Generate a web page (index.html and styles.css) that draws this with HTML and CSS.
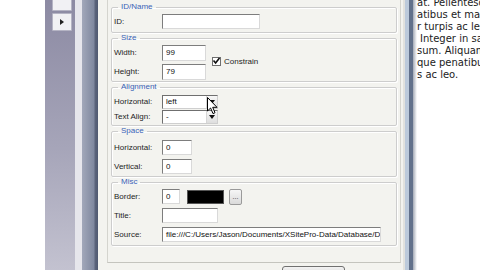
FILE: index.html
```html
<!DOCTYPE html>
<html lang="en">
<head>
  <meta charset="UTF-8" />
  <meta name="viewport" content="width=device-width, initial-scale=1.0"/>
  <title>Image Properties</title>
  <link rel="stylesheet" href="styles.css">
</head>
<body>
  <div class="desk">
    <div class="blank"></div>

    <!-- side toolbar behind the dialog -->
    <div class="toolstrip">
      <div class="tool-btn tool-btn-top"></div>
      <div class="tool-btn"><span class="tri-right"></span></div>
    </div>
    <div class="strip-edge"></div>
    <div class="frame-left"></div>

    <!-- properties dialog -->
    <div class="dialog">
      <div class="panel">
        <fieldset class="group g-id">
          <legend>ID/Name</legend>
          <div class="row"><span class="lbl">ID:</span><div class="field w-id"></div></div>
        </fieldset>

        <fieldset class="group g-size">
          <legend>Size</legend>
          <div class="size-grid">
            <div class="row"><span class="lbl">Width:</span><div class="field w-num">99</div></div>
            <div class="row"><span class="lbl">Height:</span><div class="field w-num">79</div></div>
            <div class="check">
              <svg class="check-box" width="9" height="9" viewBox="0 0 9 9">
                <rect x="0.5" y="0.5" width="8" height="8" fill="#fff" stroke="#6f6f6f"/>
                <path d="M1.5 3.5 L3.6 6 L7.5 1" fill="none" stroke="#111" stroke-width="1.6"/>
              </svg>
              <span>Constrain</span>
            </div>
          </div>
        </fieldset>

        <fieldset class="group g-align">
          <legend>Alignment</legend>
          <div class="row row-sm"><span class="lbl">Horizontal:</span><div class="select"><span class="sel-text">left</span><span class="sel-arrow"></span></div></div>
          <div class="row row-sm"><span class="lbl">Text Align:</span><div class="select"><span class="sel-text">-</span><span class="sel-arrow"></span></div></div>
        </fieldset>

        <fieldset class="group g-space">
          <legend>Space</legend>
          <div class="row"><span class="lbl">Horizontal:</span><div class="field w-space">0</div></div>
          <div class="row"><span class="lbl">Vertical:</span><div class="field w-space">0</div></div>
        </fieldset>

        <fieldset class="group g-misc">
          <legend>Misc</legend>
          <div class="row">
            <span class="lbl">Border:</span>
            <div class="field w-border">0</div>
            <div class="swatch"></div>
            <div class="dots">...</div>
          </div>
          <div class="row"><span class="lbl">Title:</span><div class="field w-title"></div></div>
          <div class="row"><span class="lbl">Source:</span><div class="field w-src">file:///C:/Users/Jason/Documents/XSitePro-Data/Database/Default</div></div>
        </fieldset>
      </div>
      <div class="dialog-foot"><div class="foot-btn"></div></div>
    </div>
    <div class="frame-right"></div>

    <!-- page text partly hidden under the dialog -->
    <div class="page">
      <div class="line">at. Pellentesque</div>
      <div class="line">atibus et magnis</div>
      <div class="line">r turpis ac leo</div>
      <div class="line line-in">Integer in sapien</div>
      <div class="line">sum. Aliquam</div>
      <div class="line">que penatibus</div>
      <div class="line">s ac leo.</div>
    </div>
  </div>

  <svg class="cursor" width="11" height="18" viewBox="0 0 11 18">
    <path d="M0.5 0.5 L0.5 14 L3.6 11 L6 16.6 L8 15.7 L5.7 10.3 L10 10.3 Z" fill="#fff" stroke="#000" stroke-width="1"/>
  </svg>
</body>
</html>
```

FILE: styles.css
```css
/* General */
* {
  box-sizing: border-box;
}

body {
  margin: 0;
  width: 480px;
  height: 270px;
  overflow: hidden;
  background: #fff;
  font-family: "Liberation Sans", Arial, sans-serif;
  position: relative;
}

.desk {
  display: flex;
  height: 270px;
}

.blank {
  width: 45px;
  flex: none;
  background: #fff;
}

/* Side toolbar */
.toolstrip {
  width: 30px;
  flex: none;
  background: linear-gradient(#8c8aa3, #a6a5b9 55%, #c3c2d0);
  display: flex;
  flex-direction: column;
  gap: 2px;
  padding-left: 7px;
}

.tool-btn {
  width: 20px;
  height: 18px;
  background: #f1f1f4;
  border: 1px solid #b5b4c4;
  border-radius: 1px;
  display: flex;
  align-items: center;
  justify-content: center;
}

.tool-btn-top {
  height: 16px;
  margin-top: -5px;
}

.tri-right {
  width: 0;
  height: 0;
  border-top: 3px solid transparent;
  border-bottom: 3px solid transparent;
  border-left: 4px solid #222;
}

.strip-edge {
  width: 7px;
  flex: none;
  background: #e6e6ec;
}

.frame-left {
  width: 16px;
  flex: none;
  background: linear-gradient(90deg, #a2a8ba 0, #7f889f 12px, #5b647b 13px, #4f5971 16px);
}

/* Dialog */
.dialog {
  width: 305px;
  flex: none;
  background: #f3f3ef;
  padding: 0 2px 0 9px;
  display: flex;
  flex-direction: column;
}

.panel {
  height: 263px;
  flex: none;
  border-left: 1px solid #d4d4ce;
  border-right: 1px solid #d4d4ce;
  border-bottom: 1px solid #c4c4be;
  padding: 2px 3px 0 3px;
}

.group {
  margin: 0;
  padding: 0 2px;
  border: 1px solid #cdcdcd;
  border-radius: 2px;
  box-shadow: inset 1px 1px 0 #fff, 1px 1px 0 #fff;
  min-width: 0;
}

.group legend {
  margin-left: 4px;
  padding: 0 3px;
  color: #3a62b6;
  font-size: 8px;
  line-height: 10px;
}

.g-id { padding-bottom: 1px; }
.g-size { padding-bottom: 0; }
.g-align { padding-top: 2px; padding-bottom: 1px; }
.g-space { padding-top: 2px; padding-bottom: 0; }
.g-misc { padding-bottom: 1px; }

.row {
  display: flex;
  align-items: center;
  height: 19px;
}

.row-sm {
  height: 15px;
}

.lbl {
  width: 48px;
  flex: none;
  font-size: 8px;
  color: #1d1d1d;
}

.field {
  height: 15px;
  flex: none;
  border: 1px solid;
  border-color: #7d7d7d #d9d9d9 #d9d9d9 #7d7d7d;
  background: #fff;
  font-size: 8px;
  line-height: 13px;
  padding-left: 3px;
  color: #111;
  overflow: hidden;
  white-space: nowrap;
}

.w-id { width: 98px; }
.w-num { width: 44px; height: 16px; }
.w-space { width: 30px; }
.w-border { width: 18px; }
.w-title { width: 56px; }
.w-src { width: 219px; }

/* Size group */
.size-grid {
  display: grid;
  grid-template-columns: max-content max-content;
  grid-template-rows: 19px 19px;
  justify-content: start;
}

.check {
  grid-column: 2;
  grid-row: 1 / 3;
  align-self: center;
  margin-left: 6px;
  margin-top: -1px;
  display: flex;
  align-items: center;
  gap: 3px;
  font-size: 8px;
  color: #1d1d1d;
}

/* Selects */
.select {
  width: 56px;
  height: 14px;
  display: flex;
  border: 1px solid;
  border-color: #6f6f6f #cfcfcf #cfcfcf #6f6f6f;
  background: #fff;
}

.sel-text {
  flex: 1;
  font-size: 8px;
  line-height: 12px;
  padding-left: 3px;
  color: #111;
}

.sel-arrow {
  width: 11px;
  border-left: 1px solid #d6d6d6;
  background: linear-gradient(#f7f7f7, #dedede);
  display: flex;
  align-items: center;
  justify-content: center;
}

.sel-arrow::after {
  content: "";
  border-left: 3px solid transparent;
  border-right: 3px solid transparent;
  border-top: 4px solid #111;
}

/* Misc group */
.swatch {
  width: 37px;
  height: 14px;
  margin-left: 7px;
  background: #000;
  border: 1px solid #555;
}

.dots {
  width: 13px;
  height: 16px;
  margin-left: 5px;
  border: 1px solid #9a9a9a;
  border-radius: 2px;
  background: linear-gradient(#f6f6f6, #dadada);
  font-size: 7px;
  line-height: 14px;
  text-align: center;
  color: #333;
}

/* Dialog footer */
.dialog-foot {
  flex: 1;
  padding: 3px 0 0 175px;
}

.foot-btn {
  width: 63px;
  height: 10px;
  border: 1px solid #707070;
  border-radius: 3px;
  background: linear-gradient(#f2f2f2, #dcdcdc);
}

.frame-right {
  width: 14px;
  flex: none;
  background: linear-gradient(90deg, #e2e2de 0 2px, #bccadb 2px 6px, #62718b 6px 10px, #a4aab6 10px, #fff 14px);
}

/* Page behind */
.page {
  flex: 1;
  overflow: hidden;
  margin-top: -3px;
  font-family: "DejaVu Sans", Verdana, sans-serif;
  font-size: 10px;
  line-height: 12px;
  color: #222;
  white-space: nowrap;
}

.line-in {
  padding-left: 3px;
}

.cursor {
  position: absolute;
  left: 207px;
  top: 97px;
}
```
